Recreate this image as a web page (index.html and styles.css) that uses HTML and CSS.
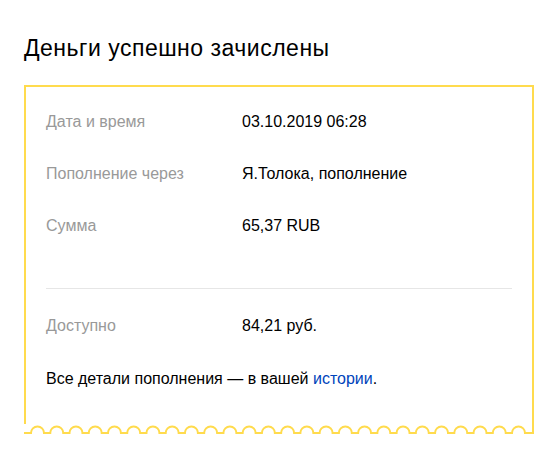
FILE: index.html
```html
<!DOCTYPE html>
<html lang="ru">
<head>
<meta charset="utf-8">
<title>Деньги успешно зачислены</title>
<link rel="stylesheet" href="styles.css">
</head>
<body>
<main class="page">
  <h1 class="title">Деньги успешно зачислены</h1>
  <section class="receipt">
    <div class="receipt-body">
      <dl class="details">
        <dt class="label">Дата и время</dt>
        <dd class="value">03.10.2019 06:28</dd>
        <dt class="label">Пополнение через</dt>
        <dd class="value">Я.Толока, пополнение</dd>
        <dt class="label">Сумма</dt>
        <dd class="value">65,37 RUB</dd>
      </dl>
      <hr class="divider">
      <dl class="details">
        <dt class="label">Доступно</dt>
        <dd class="value">84,21 руб.</dd>
      </dl>
      <p class="note">Все детали пополнения — в вашей <a class="link" href="#">истории</a>.</p>
    </div>
    <svg class="edge" width="510" height="10" viewBox="0 0 510 10" aria-hidden="true">
      <path fill="none" stroke="#ffdb4d" stroke-width="2" d="M0 9 h7 a6.5 6.5 0 0 1 13 0 h6.24 a6.5 6.5 0 0 1 13 0 h6.24 a6.5 6.5 0 0 1 13 0 h6.24 a6.5 6.5 0 0 1 13 0 h6.24 a6.5 6.5 0 0 1 13 0 h6.24 a6.5 6.5 0 0 1 13 0 h6.24 a6.5 6.5 0 0 1 13 0 h6.24 a6.5 6.5 0 0 1 13 0 h6.24 a6.5 6.5 0 0 1 13 0 h6.24 a6.5 6.5 0 0 1 13 0 h6.24 a6.5 6.5 0 0 1 13 0 h6.24 a6.5 6.5 0 0 1 13 0 h6.24 a6.5 6.5 0 0 1 13 0 h6.24 a6.5 6.5 0 0 1 13 0 h6.24 a6.5 6.5 0 0 1 13 0 h6.24 a6.5 6.5 0 0 1 13 0 h6.24 a6.5 6.5 0 0 1 13 0 h6.24 a6.5 6.5 0 0 1 13 0 h6.24 a6.5 6.5 0 0 1 13 0 h6.24 a6.5 6.5 0 0 1 13 0 h6.24 a6.5 6.5 0 0 1 13 0 h6.24 a6.5 6.5 0 0 1 13 0 h6.24 a6.5 6.5 0 0 1 13 0 h6.24 a6.5 6.5 0 0 1 13 0 h6.24 a6.5 6.5 0 0 1 13 0 h6.24 a6.5 6.5 0 0 1 13 0 H509 V0"/>
    </svg>
  </section>
</main>
</body>
</html>
```

FILE: styles.css
```css
* { box-sizing: border-box; }

body {
  margin: 0;
  background: #fff;
  font-family: "Liberation Sans", Arial, sans-serif;
  color: #000;
}

.page {
  padding: 34px 0 0 24px;
}

.title {
  margin: 0;
  font-size: 23px;
  line-height: 28px;
  letter-spacing: 0.5px;
  font-weight: normal;
}

.receipt {
  width: 510px;
  margin-top: 23px;
}

.receipt-body {
  border: 2px solid #ffdb4d;
  border-bottom: 0;
  padding: 25px 20px 35px;
}

.details {
  display: grid;
  grid-template-columns: 196px 1fr;
  row-gap: 32px;
  margin: 0;
  font-size: 16px;
  line-height: 20px;
}

.label {
  color: #999;
}

.value {
  margin: 0;
}

.divider {
  border: 0;
  border-top: 1px solid #e6e6e6;
  margin: 52px 0 27px;
}

.note {
  margin: 33px 0 0;
  font-size: 16px;
  line-height: 20px;
}

.link {
  color: #04b;
  text-decoration: none;
}

.edge {
  display: block;
}
```
